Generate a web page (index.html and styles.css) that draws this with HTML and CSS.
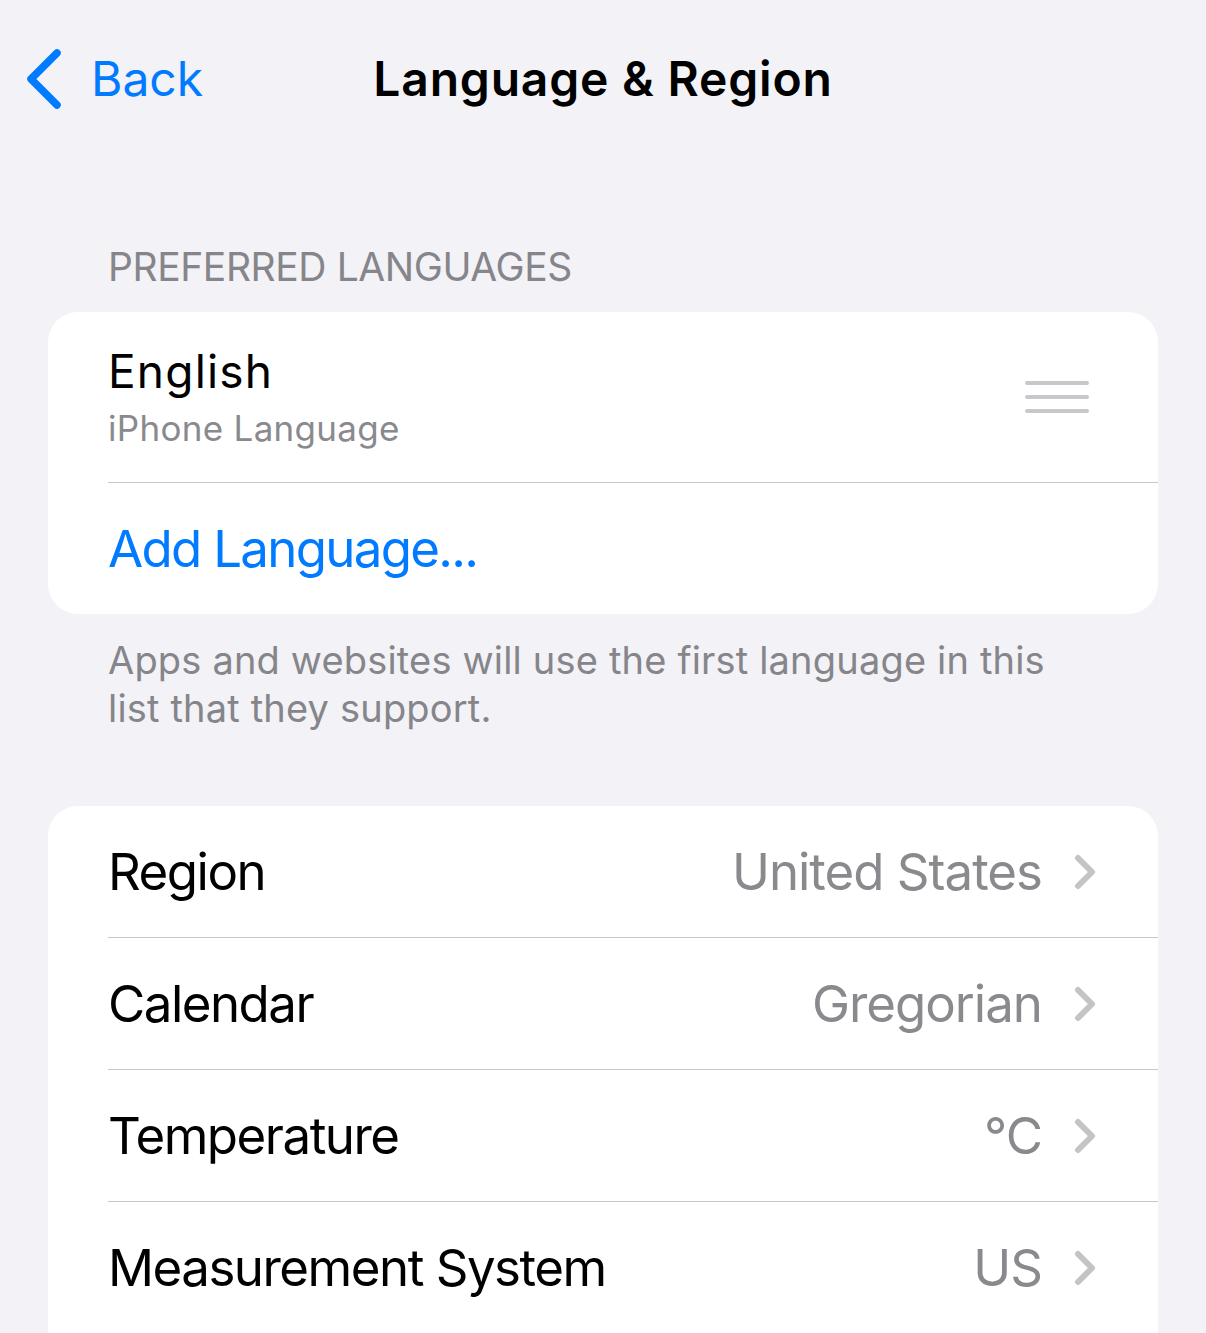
FILE: index.html
```html
<!DOCTYPE html>
<html lang="en">
<head>
<meta charset="utf-8">
<title>Language &amp; Region</title>
<link rel="stylesheet" href="styles.css">
</head>
<body>
<div class="screen">
  <header class="nav">
    <a class="back" href="#">
      <svg class="back-icon" viewBox="0 0 40 56" aria-hidden="true"><path d="M33 2 L7 28 L33 54"/></svg>
      <span>Back</span>
    </a>
    <h1 class="title">Language &amp; Region</h1>
    <div class="nav-spacer"></div>
  </header>

  <section class="group">
    <h2 class="group-header">PREFERRED LANGUAGES</h2>
    <div class="card">
      <div class="row">
        <div class="row-body lang-body">
          <div class="lang-text">
            <div class="lang-name">English</div>
            <div class="lang-sub">iPhone Language</div>
          </div>
          <svg class="handle" viewBox="0 0 64 32" aria-hidden="true"><path d="M2 2 H62 M2 16 H62 M2 30 H62"/></svg>
        </div>
      </div>
      <div class="row">
        <div class="row-body sep"><span class="link">Add Language...</span></div>
      </div>
    </div>
    <p class="group-footer">Apps and websites will use the first language in this list that they support.</p>
  </section>

  <section class="group group-second">
    <div class="card card-open">
      <div class="row">
        <div class="row-body">
          <span class="label">Region</span><span class="value">United States</span>
          <svg class="chev" viewBox="0 0 22 36" aria-hidden="true"><path d="M4 4 L18 18 L4 32"/></svg>
        </div>
      </div>
      <div class="row">
        <div class="row-body sep">
          <span class="label">Calendar</span><span class="value">Gregorian</span>
          <svg class="chev" viewBox="0 0 22 36" aria-hidden="true"><path d="M4 4 L18 18 L4 32"/></svg>
        </div>
      </div>
      <div class="row">
        <div class="row-body sep">
          <span class="label">Temperature</span><span class="value">°C</span>
          <svg class="chev" viewBox="0 0 22 36" aria-hidden="true"><path d="M4 4 L18 18 L4 32"/></svg>
        </div>
      </div>
      <div class="row">
        <div class="row-body sep">
          <span class="label">Measurement System</span><span class="value">US</span>
          <svg class="chev" viewBox="0 0 22 36" aria-hidden="true"><path d="M4 4 L18 18 L4 32"/></svg>
        </div>
      </div>
    </div>
  </section>
</div>
</body>
</html>
```

FILE: styles.css
```css
html, body {
  margin: 0;
  padding: 0;
}
body {
  background: #f2f2f7;
  font-family: Inter, "Noto Sans", "Liberation Sans", sans-serif;
  color: #000;
  -webkit-font-smoothing: antialiased;
}
.screen {
  width: 1206px;
}

/* nav bar */
.nav {
  display: grid;
  grid-template-columns: 1fr auto 1fr;
  align-items: center;
  padding-top: 51px;
  height: 56px;
}
.back {
  display: flex;
  align-items: center;
  padding-left: 24px;
  color: #007aff;
  text-decoration: none;
  font-size: 48px;
  line-height: 56px;
  letter-spacing: 0;
}
.back-icon {
  width: 40px;
  height: 56px;
  margin-right: 27px;
  overflow: visible;
  fill: none;
  stroke: #007aff;
  stroke-width: 7.5;
  stroke-linecap: round;
  stroke-linejoin: round;
}
.title {
  margin: 0;
  font-size: 48px;
  font-weight: 600;
  line-height: 56px;
  letter-spacing: 0.8px;
  text-align: center;
}

/* groups */
.group-header {
  margin: 136px 0 22px;
  padding-left: 108px;
  font-size: 39px;
  font-weight: 400;
  line-height: 47px;
  color: #85858a;
  letter-spacing: -0.4px;
}
.card {
  margin: 0 48px;
  background: #fff;
  border-radius: 30px;
  overflow: hidden;
}
.card-open {
  padding-bottom: 40px;
}
.row {
  padding-left: 60px;
}
.row-body {
  display: flex;
  align-items: center;
  height: 131px;
  padding-right: 62px;
}
.row-body.sep {
  border-top: 1px solid #c6c6c8;
}
.label {
  flex: 1;
  font-size: 51px;
  letter-spacing: -1.5px;
  white-space: nowrap;
}
.value {
  font-size: 51px;
  letter-spacing: -1px;
  color: #8a8a8e;
  white-space: nowrap;
}
.chev {
  width: 22px;
  height: 36px;
  margin-left: 32px;
  fill: none;
  stroke: #c4c4c7;
  stroke-width: 6;
  stroke-linecap: round;
  stroke-linejoin: round;
}
.link {
  font-size: 51px;
  letter-spacing: -1.7px;
  color: #007aff;
}

/* language row */
.lang-body {
  height: 170px;
  padding-right: 69px;
}
.lang-text {
  flex: 1;
}
.lang-name {
  font-size: 46px;
  line-height: 52px;
  letter-spacing: 1.2px;
}
.lang-sub {
  margin-top: 10px;
  font-size: 35px;
  line-height: 42px;
  letter-spacing: 0.3px;
  color: #8a8a8e;
}
.handle {
  width: 64px;
  height: 32px;
  fill: none;
  stroke: #c7c7cc;
  stroke-width: 4;
  stroke-linecap: round;
}

.group-footer {
  margin: 22px 0 0;
  padding: 0 108px;
  font-size: 38px;
  line-height: 48px;
  letter-spacing: 0.18px;
  color: #85858a;
}
.group-second {
  margin-top: 74px;
}
```
